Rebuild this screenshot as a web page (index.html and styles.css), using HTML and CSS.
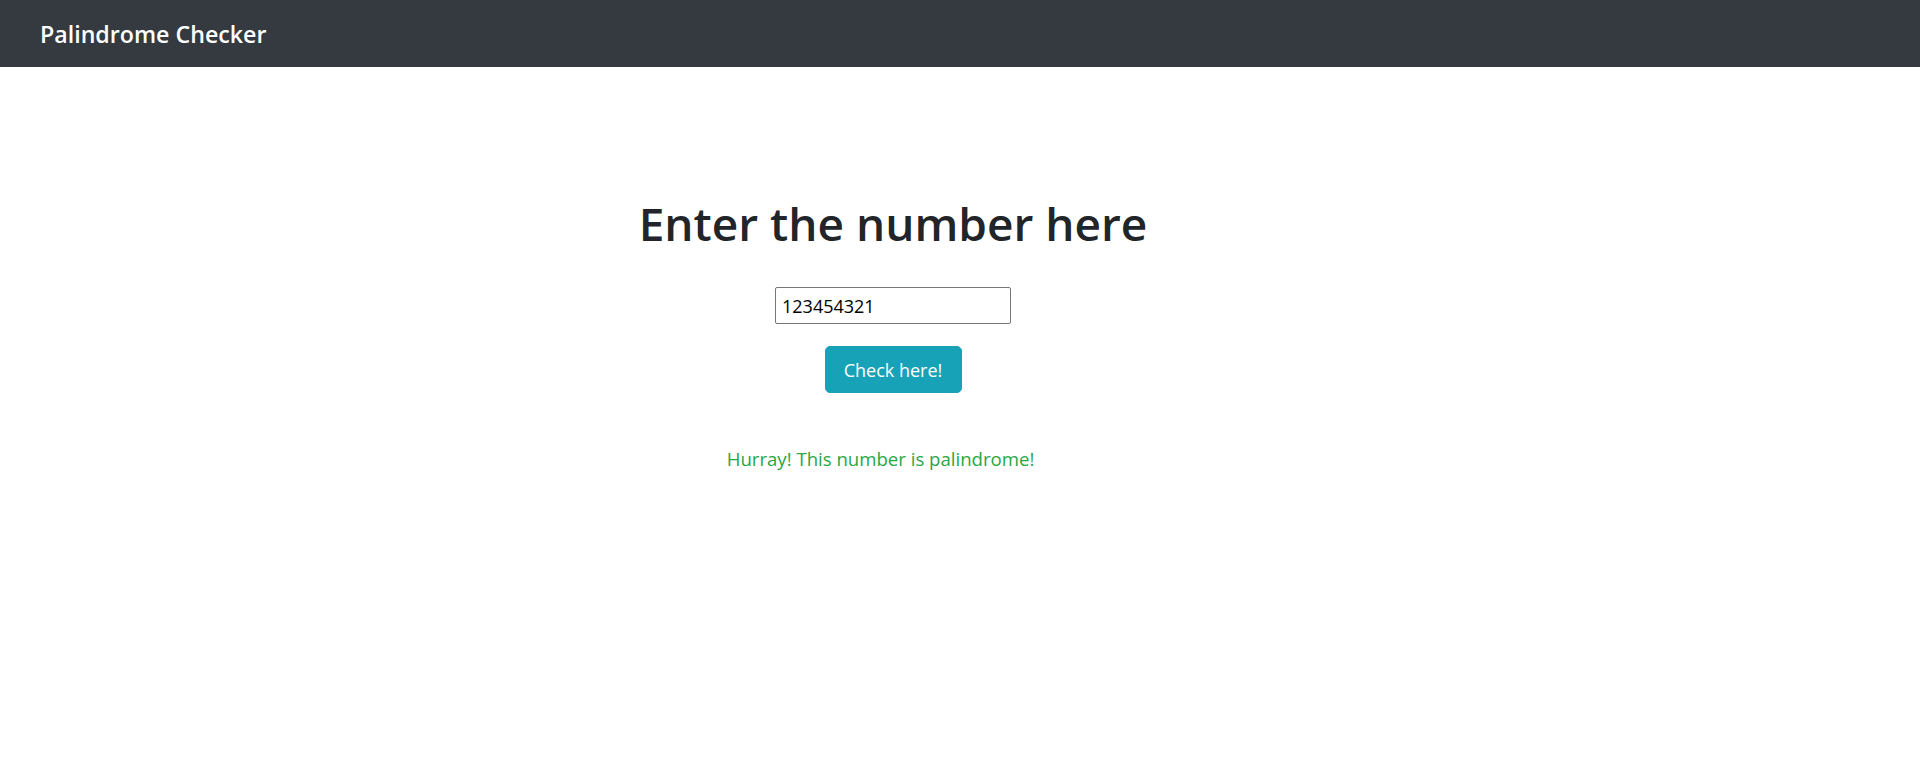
FILE: index.html
```html
<!DOCTYPE html>
<html lang="en">
<head>
<meta charset="utf-8">
<title>Palindrome Checker</title>
<link rel="stylesheet" href="styles.css">
</head>
<body>
<nav class="navbar">
  <span class="brand">Palindrome Checker</span>
</nav>
<main class="main">
  <div class="column">
    <h1 class="title">Enter the number here</h1>
    <input class="number-input" type="text" value="123454321">
    <button class="check-btn" type="button">Check here!</button>
    <p class="result">Hurray! This number is palindrome!</p>
  </div>
</main>
</body>
</html>
```

FILE: styles.css
```css
* { box-sizing: border-box; }
html, body { margin: 0; padding: 0; }
body {
  font-family: "Open Sans", "Noto Sans", sans-serif;
  color: #212529;
  background: #fff;
}
.navbar {
  height: 67px;
  background: #343a40;
  display: flex;
  align-items: center;
  padding: 0 40px;
}
.brand {
  color: #fff;
  font-size: 23.2px;
  font-weight: 600;
  line-height: 1;
  padding-top: 2px;
}
.main {
  display: flex;
  justify-content: flex-start;
}
.column {
  margin-left: 593px;
  width: 600px;
  display: flex;
  flex-direction: column;
  align-items: center;
  padding-top: 127px;
}
.title {
  margin: 0;
  font-size: 46px;
  font-weight: 600;
  line-height: 58px;
  color: #212529;
}
.number-input {
  margin-top: 35px;
  width: 236px;
  height: 37px;
  border: 1px solid #767676;
  border-radius: 2px;
  padding: 0 6px;
  font-family: "Open Sans", "Noto Sans", sans-serif;
  font-size: 18px;
  color: #000;
}
.check-btn {
  margin-top: 22px;
  width: 137px;
  height: 47px;
  background: #17a2b8;
  border: 1px solid #17a2b8;
  border-radius: 5px;
  color: #fff;
  font-family: "Open Sans", "Noto Sans", sans-serif;
  font-size: 18px;
  padding: 0;
}
.result {
  margin: 52px 25px 0 0;
  color: #28a745;
  font-size: 18.6px;
  line-height: 27px;
}
```
